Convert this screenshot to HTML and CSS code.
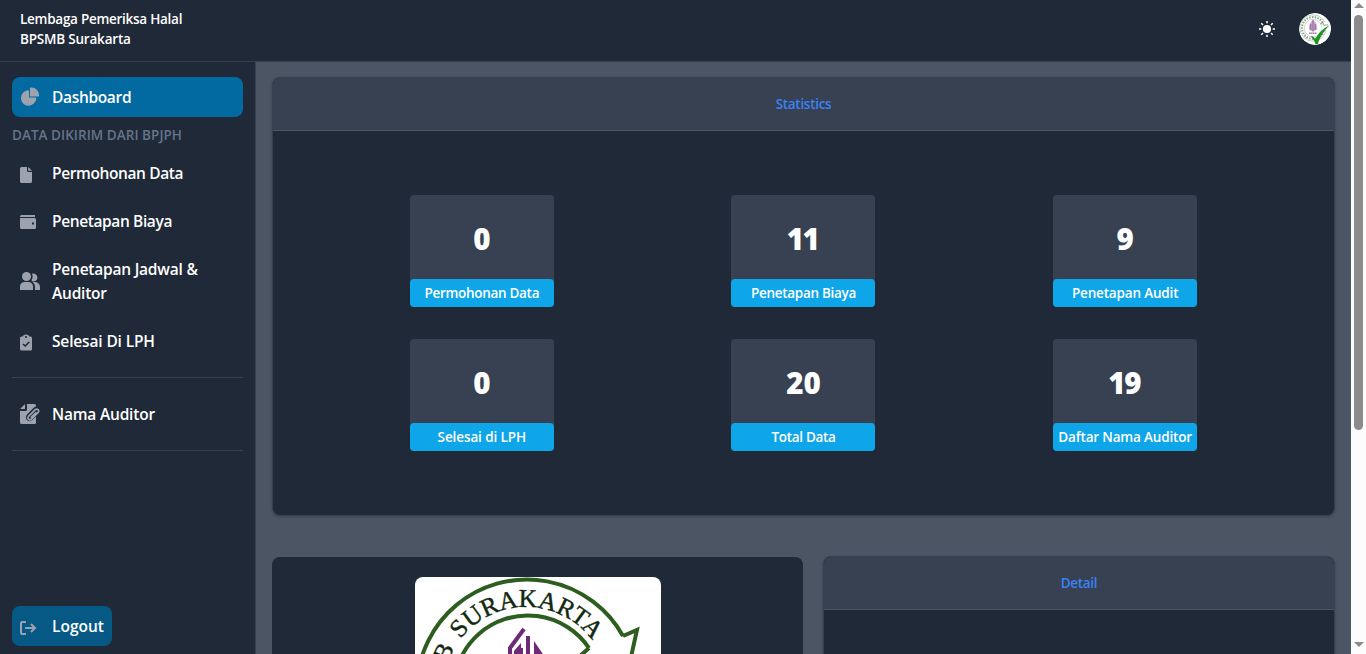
FILE: index.html
```
<!DOCTYPE html>
<html lang="id">
<head>
<meta charset="utf-8">
<title>Lembaga Pemeriksa Halal</title>
<link rel="stylesheet" href="styles.css">
</head>
<body>
<div class="page">
  <header class="navbar">
    <div class="brand"><span class="brand-name">Lembaga Pemeriksa Halal</span><br><span class="brand-org">BPSMB Surakarta</span></div>
    <div class="nav-actions">
      <svg class="sun" viewBox="0 0 16 16"><circle cx="8" cy="8" r="4.1" fill="#fff"/><path d="M8 0v2.300M8 13.700V16M0 8h2.300M13.700 8H16M2.300 2.300 4 4M12 12l1.700 1.700M13.700 2.300 12 4M4 12l-1.700 1.700" stroke="#fff" stroke-width="1.500"/></svg>
      <svg class="avatar" viewBox="0 0 32 32">
        <circle cx="16" cy="16" r="16" fill="#fff"/>
        <circle cx="14" cy="15" r="13.2" fill="none" stroke="#8ba28a" stroke-width=".5"/>
        <circle cx="14" cy="15" r="11" fill="none" stroke="#8fa58f" stroke-width="2.2" stroke-dasharray="1.5 1.3"/>
        <circle cx="14" cy="15" r="8.7" fill="#fff" stroke="#9db39c" stroke-width=".5"/>
        <path d="M14 6.5 10.5 11l-.7 5L14 19l4.2-3-.7-5Z" fill="#c6a9cc"/>
        <path d="M14 7v11M11.8 11v6M16.2 11v6" stroke="#8b5899" stroke-width=".9"/>
        <path d="M10.3 20.2h7.5" stroke="#9a6ca6" stroke-width="1.5" stroke-dasharray="1.4 .5"/>
        <path d="M26 9 32 7v10H22l1-5Z" fill="#fff"/>
        <path d="m21 11 3-1.5 1 3 4-.8" fill="none" stroke="#63815f" stroke-width=".7"/>
        <path d="M11.500 23.500c2-.6 3.800 1 4.700 2.600 3.500-6.500 8.300-11 15-14-5.700 4.800-9.600 10.500-12.300 18.900h-2.400c-1-3.500-2.500-5.500-5-7.500Z" fill="#209323"/>
      </svg>
    </div>
  </header>
  <div class="body">
    <aside class="sidebar">
      <nav class="menu">
        <a class="item active"><svg class="ic" viewBox="0 0 22 21"><path d="M16.975 11H10V4.025a1 1 0 0 0-1.066-.998 8.5 8.5 0 1 0 9.039 9.039.999.999 0 0 0-1-1.066h.002Z"/><path d="M12.5 0c-.157 0-.311.01-.565.027A1 1 0 0 0 11 1.02V10h8.975a1 1 0 0 0 1-.935c.013-.188.028-.374.028-.565A8.51 8.51 0 0 0 12.5 0Z"/></svg><span class="t-dash">Dashboard</span></a>
        <div class="section">DATA DIKIRIM DARI BPJPH</div>
        <a class="item"><svg class="ic" viewBox="0 0 20 20"><path d="M1.500 4H7v3.500A1.500 1.500 0 0 0 8.500 9H12v9.500a1.500 1.500 0 0 1-1.500 1.500h-9A1.500 1.500 0 0 1 0 18.500v-13A1.500 1.500 0 0 1 1.500 4ZM8.200 4 12 7.800H8.200Z"/></svg><span class="t-perm">Permohonan Data</span></a>
        <a class="item"><svg class="ic" viewBox="0 0 20 20"><path d="M1.500 4H15v2H0v-.5A1.500 1.500 0 0 1 1.500 4Z"/><path fill-rule="evenodd" d="M0 7h14.500A1.500 1.500 0 0 1 16 8.500v8a1.500 1.500 0 0 1-1.500 1.500h-13A1.500 1.500 0 0 1 0 16.500Zm12 4.500v2h2v-2Z"/></svg><span class="t-biaya">Penetapan Biaya</span></a>
        <a class="item"><svg class="ic" viewBox="0 0 20 20"><circle cx="6.500" cy="5.500" r="4.500"/><path d="M4.500 11h4A4.500 4.500 0 0 1 13 15.500V19H0v-3.500A4.500 4.500 0 0 1 4.500 11ZM11.500 9a6 6 0 0 0 .4-6.200A4 4 0 1 1 12 10.200ZM12.600 11H15a5 5 0 0 1 5 5v3h-5v-3.500a6 6 0 0 0-2.400-4.500Z"/></svg><span class="t-jad">Penetapan Jadwal &amp;<br>Auditor</span></a>
        <a class="item"><svg class="ic" viewBox="0 0 20 20"><path d="M1.500 5.500H2.500L4 4.500h4L9.500 5.500h1A1.500 1.500 0 0 1 12 7v11a1.500 1.500 0 0 1-1.500 1.500h-9A1.500 1.500 0 0 1 0 18V7A1.500 1.500 0 0 1 1.500 5.500Z"/><path d="M3 6a3 2.500 0 0 1 6 0Z"/><path d="M5 6h2M3 13l2.200 2L9.300 11" fill="none" stroke="#1f2937" stroke-width="1.600"/></svg><span class="t-sel">Selesai Di LPH</span></a>
      </nav>
      <div class="menu divided">
        <a class="item"><svg class="ic" viewBox="0 0 20 20"><path d="M5 0v5H0ZM7 0h7.500A1.500 1.500 0 0 1 16 1.500v17a1.500 1.500 0 0 1-1.500 1.500h-13A1.500 1.500 0 0 1 0 18.500V7h5.500A1.500 1.500 0 0 0 7 5.500Z"/><path d="m7.500 10 6-6c4.300-3.900 9.300 1.100 5.600 5.300l-6.500 6.500c-4.500 4-9-1.400-5.100-5.800Z" fill="#1f2937"/><path d="m8.700 12.200 6.300-6.300c2.200-2 4.900.5 2.900 2.800l-6.300 6.300c-2.200 2-4.900-.5-2.900-2.800Zm2.100 1.500 5.400-5.400" fill="none" stroke="#9ca3af" stroke-width="1.700"/></svg><span class="t-nama">Nama Auditor</span></a>
      </div>
      <div class="divided rest"></div>
      <a class="item logout"><svg class="ic" viewBox="0 0 20 20"><path d="M6 6H2.500A1.500 1.500 0 0 0 1 7.500v9A1.500 1.500 0 0 0 2.500 18H6M5 12h10m-4-4 4 4-4 4" fill="none" stroke="#9ca3af" stroke-width="2"/></svg><span class="t-log">Logout</span></a>
    </aside>
    <main class="content">
      <section class="card">
        <h2 class="card-title">Statistics</h2>
        <div class="stats">
          <div class="tile"><div class="num">0</div><div class="label">Permohonan Data</div></div>
          <div class="tile"><div class="num tight">11</div><div class="label">Penetapan Biaya</div></div>
          <div class="tile"><div class="num">9</div><div class="label wide">Penetapan Audit</div></div>
          <div class="tile"><div class="num">0</div><div class="label wider">Selesai di LPH</div></div>
          <div class="tile"><div class="num">20</div><div class="label">Total Data</div></div>
          <div class="tile"><div class="num tight">19</div><div class="label wide">Daftar Nama Auditor</div></div>
        </div>
      </section>
      <div class="lower">
        <section class="logo-card">
          <svg class="logo" viewBox="0 0 246 246">
            <rect width="246" height="246" fill="#fff"/>
            <path d="M208 59A110 110 0 1 0 208 166M208 59l14-6-8 36" fill="none" stroke="#2d5e20" stroke-width="4"/>
            <path d="M174 71A74 74 0 1 0 174 154M174 71l-9 8" fill="none" stroke="#2d5e20" stroke-width="4"/>
            <path id="ring" d="M111 195A82.500 82.500 0 0 1 111 30A82.500 82.500 0 0 1 111 195" fill="none"/>
            <text class="logo-text" text-anchor="middle"><textPath href="#ring" startOffset="259.500">SURAKARTA</textPath></text>
            <text class="logo-text" text-anchor="end"><textPath href="#ring" startOffset="173">BPSMB</textPath></text>
            <path d="M109 52 95 71v40M106 71v40M113 59v50" fill="none" stroke="#6c2a77" stroke-width="4"/>
            <path d="M119 64 132 83v30h-13ZM99 74l7-8v40h-7Z" fill="#6c2a77"/>
          </svg>
        </section>
        <section class="card detail"><h2 class="card-title">Detail</h2></section>
      </div>
    </main>
  </div>
</div>
<div class="scrollbar"><i class="arrow up"></i><i class="thumb"></i><i class="arrow down"></i></div>
</body>
</html>
```

FILE: styles.css
```
* { box-sizing: border-box; }
html, body { height: 100%; margin: 0; overflow: hidden; }
body { display: flex; font-family: "Open Sans", "Noto Sans", sans-serif; font-weight: 600; color: #fff; background: #4b5563; }
.page { flex: 1; min-width: 0; display: flex; flex-direction: column; height: 654px; }
.navbar { height: 62px; flex: none; display: flex; justify-content: space-between; padding: 9px 20px 0; background: #1f2937; border-bottom: 1px solid #374151; }
.brand { font-size: 13.500px; line-height: 20px; letter-spacing: -.27px; white-space: nowrap; }
.brand-org { letter-spacing: -.2px; }
.nav-actions { display: flex; align-items: flex-start; gap: 24px; padding-top: 4px; }
.sun { width: 16px; height: 16px; margin-top: 8px; }
.avatar { width: 32px; height: 32px; border-radius: 50%; }
.body { flex: 1; min-height: 0; display: flex; }
.sidebar { width: 256px; flex: none; display: flex; flex-direction: column; background: #1f2937; border-right: 1px solid #374151; padding: 15px 12px 8px; }
.menu { display: flex; flex-direction: column; }
.item { display: flex; align-items: center; gap: 12px; min-height: 40px; padding: 8px; border-radius: 8px; font-size: 15.500px; line-height: 24px; letter-spacing: -.33px; white-space: nowrap; }
.t-perm, .t-biaya { letter-spacing: -.38px; }
.t-jad { letter-spacing: -.22px; }
.t-sel { letter-spacing: -.15px; }
.t-nama { letter-spacing: -.2px; }
.t-log { letter-spacing: 0; }
.item + .item { margin-top: 8px; }
.active { background: #0369a1; }
.section { height: 20px; margin: 8px 0; font-size: 13.500px; line-height: 20px; font-weight: 600; color: #64748b; letter-spacing: .04px; white-space: nowrap; }
.ic { width: 20px; height: 20px; flex: none; fill: #9ca3af; }
.divided { margin-top: 16px; padding-top: 16px; border-top: 1px solid #374151; }
.rest { flex: 1; }
.logout { background: #075985; width: 100px; }
.content { flex: 1; min-width: 0; padding: 15px 16px 0; overflow: hidden; }
.card { background: #1f2937; border: 1px solid #374151; border-radius: 8px; overflow: hidden; box-shadow: 0 1px 3px rgba(0,0,0,.2); height: 439px; }
.card-title { margin: 0; height: 53px; background: #374151; border-bottom: 1px solid #4b5563; text-align: center; color: #3b82f6; font-size: 13.500px; line-height: 52px; font-weight: 600; letter-spacing: -.3px; }
.stats { display: grid; grid-template-columns: repeat(3, 1fr); row-gap: 32px; padding: 64px 48px; justify-items: center; }
.tile { width: 144px; height: 112px; background: #374151; border-radius: 4px; display: flex; flex-direction: column; }
.num { height: 84px; text-align: center; font-size: 29.500px; line-height: 87px; font-weight: 800; }
.tight { letter-spacing: -1.5px; text-indent: -2px; }
.label { height: 28px; border-radius: 4px; background: #0ea5e9; text-align: center; font-size: 13.500px; line-height: 28px; letter-spacing: -.3px; white-space: nowrap; }
.wide { letter-spacing: -.17px; }
.wider { letter-spacing: -.1px; }
.lower { display: flex; gap: 20px; margin-top: 40px; align-items: flex-start; }
.logo-card { width: 531px; height: 300px; margin-top: 1px; padding-top: 20px; display: flex; justify-content: center; background: #1f2937; border-radius: 8px; }
.logo { width: 246px; height: 246px; border-radius: 8px; }
.logo-text { font-family: "Liberation Serif", serif; font-weight: 400; font-size: 25.500px; fill: #10290f; stroke: #10290f; stroke-width: .4px; }
.detail { flex: 1; height: 300px; }
.scrollbar { width: 15px; flex: none; display: flex; flex-direction: column; align-items: center; background: #fcfcfc; }
.arrow { width: 0; height: 0; border: 5px solid transparent; border-top: 0; border-bottom: 5px solid #8b8b8b; margin-top: 3px; }
.thumb { width: 9px; height: 415px; margin-top: 7px; border-radius: 5px; background: #8b8b8b; }
.down { margin-top: auto; margin-bottom: 7px; transform: rotate(180deg); }
```
